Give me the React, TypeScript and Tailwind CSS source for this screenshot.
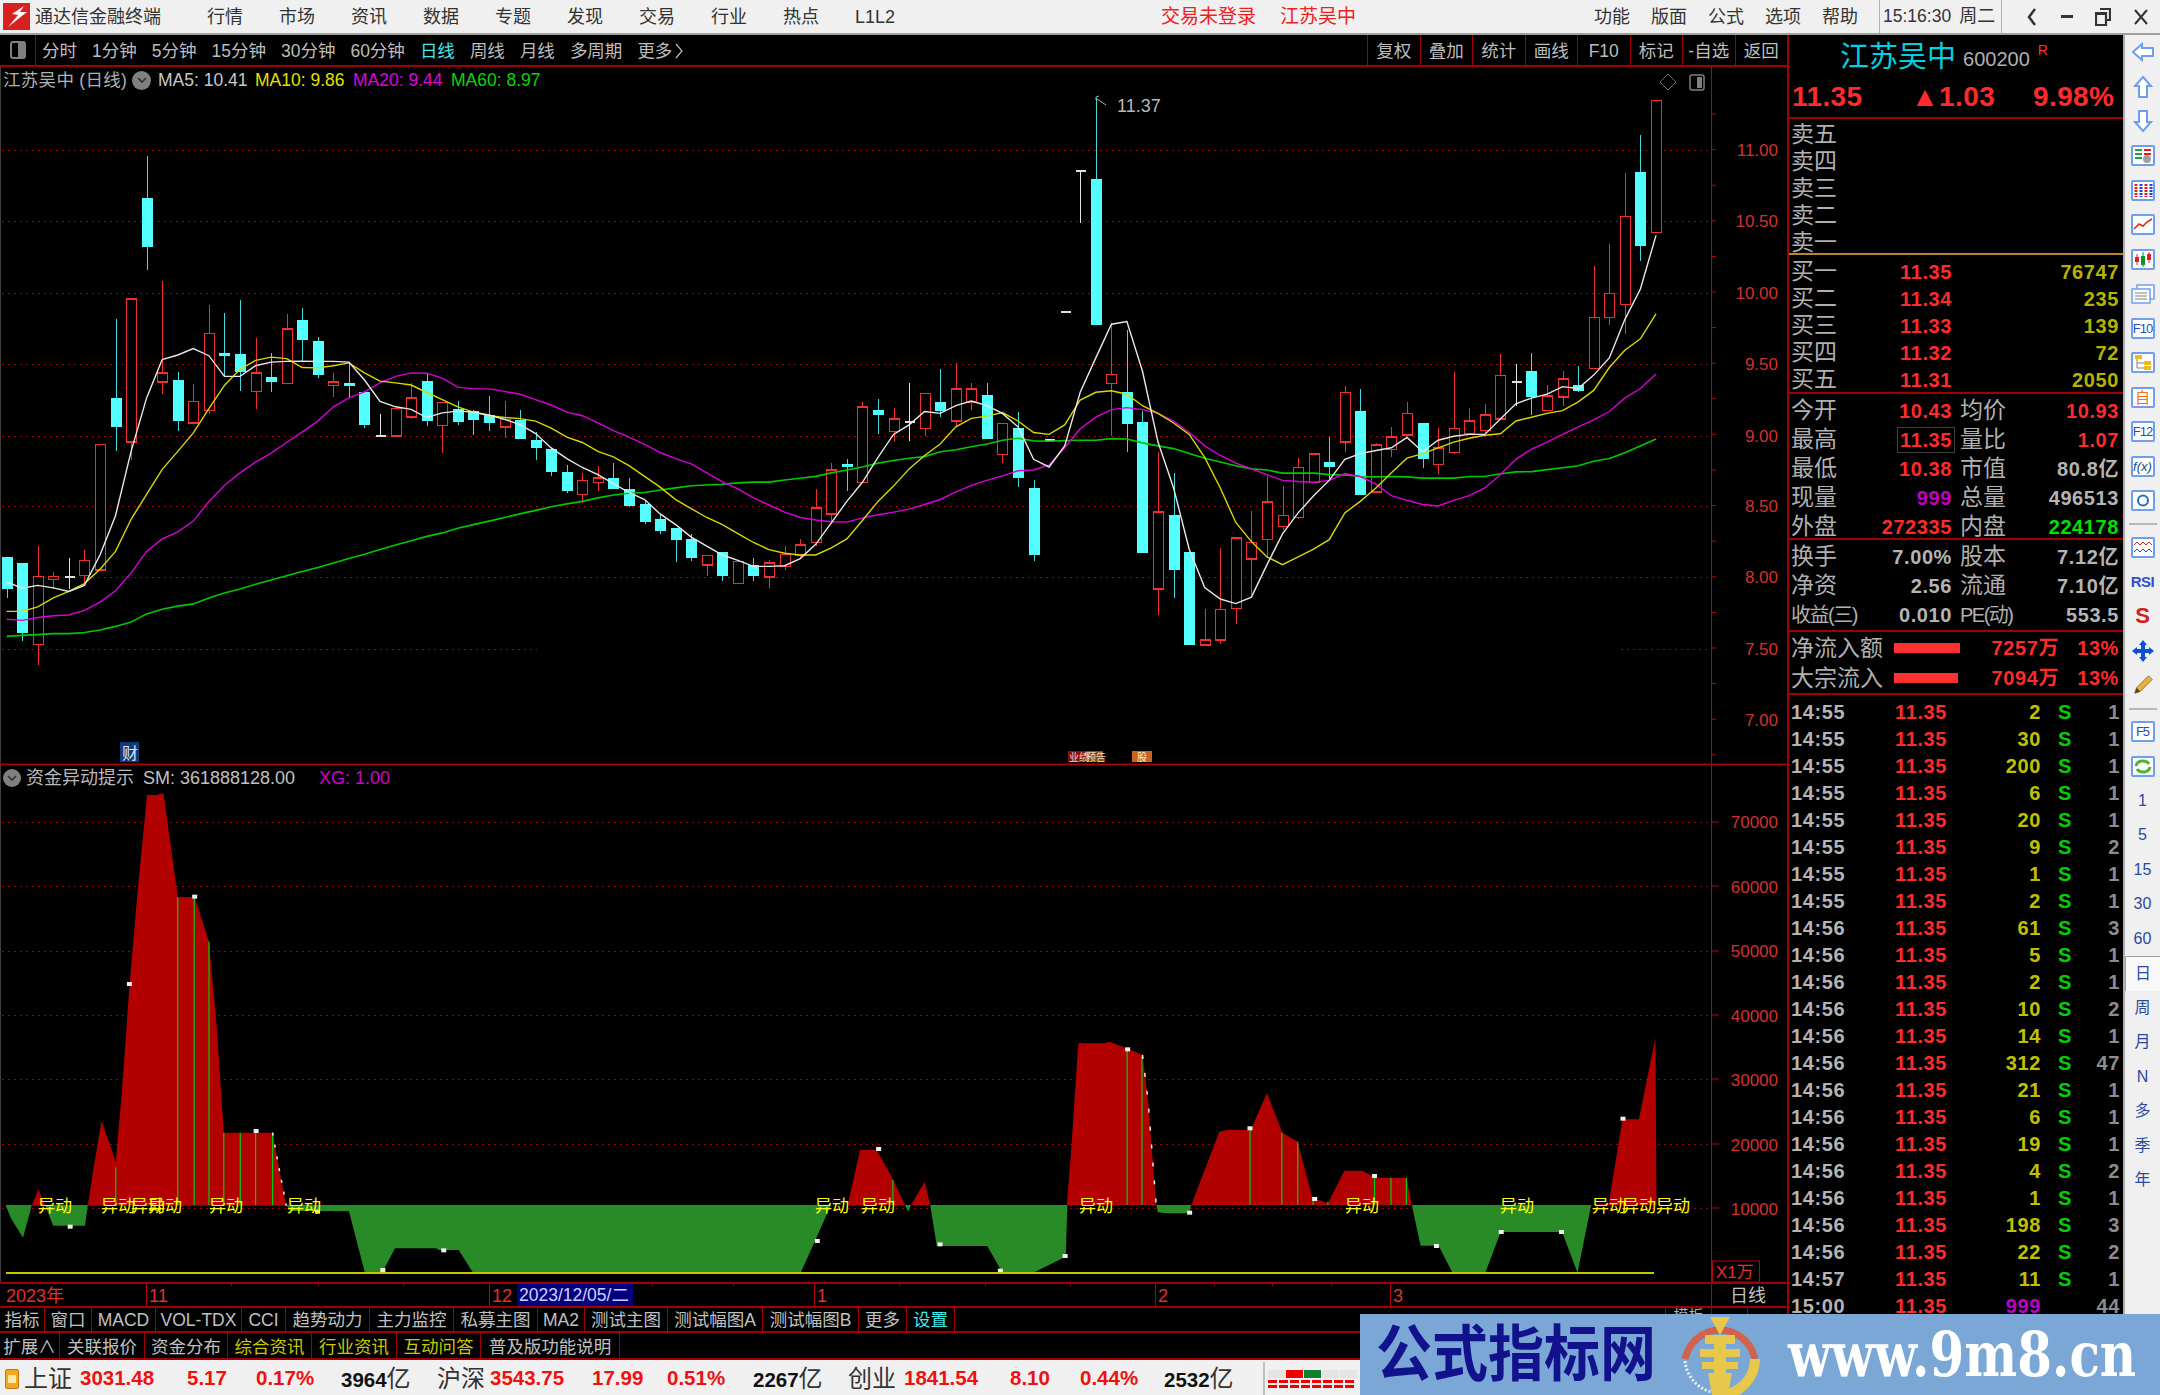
import type { ReactNode } from "react";

// --- candle data, read off the chart: [wickTop, bodyTop, bodyBottom, wickBottom, kind]
// kind 0 = up (red hollow), 1 = down (cyan), 2 = white doji
type Candle = [number, number, number, number, number];

const candlesA: Candle[] = [
  [1195, 1195, 1285, 1310, 1], [1212, 1212, 1408, 1430, 1], [1165, 1250, 1440, 1497, 0], [1238, 1250, 1256, 1285, 0],
  [1198, 1250, 1252, 1285, 2], [1175, 1205, 1248, 1270, 0], [880, 880, 1232, 1235, 0], [530, 750, 832, 900, 1],
  [473, 473, 873, 925, 0], [73, 190, 328, 392, 1], [422, 680, 706, 740, 0], [678, 699, 815, 842, 1],
  [712, 760, 820, 820, 0], [489, 570, 785, 795, 0], [513, 624, 627, 690, 1], [477, 628, 678, 732, 1],
  [582, 680, 732, 782, 0], [625, 691, 706, 733, 1], [514, 557, 710, 710, 0], [497, 531, 589, 650, 1],
  [580, 590, 686, 694, 1], [680, 705, 715, 748, 0], [650, 708, 715, 750, 1], [733, 733, 825, 833, 1],
  [796, 855, 857, 857, 2], [780, 780, 857, 857, 0], [708, 750, 803, 808, 0], [680, 704, 816, 828, 1],
  [763, 763, 828, 903, 0], [760, 780, 817, 825, 1], [785, 787, 812, 855, 1], [746, 797, 820, 842, 1],
  [760, 810, 832, 862, 0], [783, 812, 866, 866, 1], [845, 867, 891, 925, 1], [890, 892, 958, 968, 1],
  [938, 957, 1010, 1015, 1], [960, 982, 1020, 1045, 0], [940, 974, 987, 1010, 0], [933, 973, 1005, 1005, 1],
  [975, 1006, 1052, 1055, 1], [1035, 1048, 1098, 1102, 1], [1078, 1090, 1123, 1130, 1], [1115, 1115, 1148, 1210, 1],
  [1130, 1145, 1198, 1208, 1], [1192, 1192, 1218, 1250, 0], [1182, 1182, 1250, 1262, 1], [1208, 1208, 1270, 1270, 0],
  [1198, 1217, 1250, 1262, 1], [1205, 1213, 1252, 1282, 0], [1165, 1188, 1222, 1232, 0], [1145, 1162, 1190, 1195, 0],
  [1005, 1058, 1155, 1165, 0], [932, 952, 1075, 1095, 0], [920, 935, 942, 1010, 1],
];

const candlesB: Candle[] = [
  [815, 828, 1025, 1025, 0], [808, 836, 850, 898, 1], [832, 860, 892, 920, 0], [765, 864, 866, 916, 2],
  [793, 793, 885, 903, 0], [730, 816, 840, 855, 1], [714, 781, 865, 880, 0], [765, 781, 815, 835, 0],
  [765, 796, 913, 913, 1], [872, 872, 953, 975, 0], [842, 883, 1015, 1038, 1], [1020, 1040, 1215, 1230, 1],
  [911, 911, 913, 913, 2], [577, 577, 579, 579, 2], [208, 208, 210, 348, 2], [20, 232, 615, 615, 1],
  [610, 743, 767, 905, 0], [628, 790, 873, 945, 1], [838, 867, 1211, 1211, 1], [945, 1103, 1304, 1372, 0],
  [1000, 1110, 1254, 1328, 1], [1207, 1207, 1450, 1450, 1], [1357, 1437, 1450, 1450, 0], [1197, 1358, 1437, 1447, 0],
  [1170, 1170, 1355, 1395, 0], [1100, 1182, 1226, 1320, 0], [1008, 1076, 1175, 1220, 0], [1035, 1112, 1140, 1150, 0],
  [962, 987, 1117, 1120, 0], [951, 951, 1025, 1025, 0], [906, 973, 985, 1020, 1], [773, 790, 920, 945, 0],
  [780, 840, 1057, 1057, 1], [922, 927, 1050, 1050, 0], [880, 907, 940, 960, 0], [815, 845, 902, 905, 0],
  [871, 871, 963, 988, 1], [884, 935, 978, 1003, 0], [738, 884, 947, 950, 0], [832, 865, 898, 900, 0],
  [820, 849, 890, 895, 0], [690, 746, 860, 862, 0], [717, 761, 763, 825, 2], [686, 734, 803, 850, 1],
  [772, 800, 838, 840, 0], [735, 755, 802, 825, 0], [722, 770, 787, 790, 1], [460, 594, 728, 728, 0],
  [403, 532, 594, 614, 0], [216, 331, 560, 638, 0], [118, 213, 407, 447, 1], [28, 28, 372, 372, 0],
];

const ma5A = [1265, 1283, 1275, 1282, 1292, 1275, 1190, 1080, 900, 750, 643, 630, 612, 632, 690, 690, 660, 650, 648, 647, 648, 648, 650, 700, 760, 775, 782, 805, 792, 787, 790, 798, 810, 825, 850, 890, 920, 945, 965, 990, 1015, 1035, 1075, 1105, 1140, 1165, 1190, 1205, 1222, 1222, 1220, 1200, 1160, 1100, 1040];
const ma5B = [1025, 960, 900, 875, 840, 845, 825, 813, 825, 845, 880, 965, 985, 930, 790, 700, 612, 605, 735, 920, 1040, 1200, 1300, 1330, 1342, 1325, 1240, 1160, 1105, 1060, 1020, 965, 950, 942, 935, 908, 945, 915, 905, 900, 900, 860, 820, 805, 795, 775, 780, 745, 700, 600, 520, 380];
const ma10A = [1348, 1348, 1335, 1310, 1292, 1270, 1230, 1180, 1090, 1020, 950, 900, 848, 780, 715, 670, 645, 636, 640, 665, 666, 660, 652, 680, 703, 708, 714, 735, 755, 775, 790, 800, 805, 808, 815, 835, 860, 875, 900, 915, 940, 970, 1000, 1035, 1060, 1085, 1105, 1130, 1155, 1175, 1185, 1190, 1190, 1170, 1145];
const ma10B = [1125, 1075, 1035, 990, 955, 925, 880, 858, 852, 843, 865, 895, 900, 875, 810, 790, 786, 795, 825, 845, 870, 900, 960, 1040, 1130, 1180, 1220, 1240, 1220, 1200, 1175, 1105, 1075, 1040, 1000, 962, 950, 935, 920, 910, 902, 898, 865, 855, 845, 838, 815, 785, 725, 680, 650, 585];
const ma20A = [1370, 1373, 1365, 1360, 1358, 1345, 1322, 1290, 1240, 1180, 1145, 1125, 1095, 1040, 995, 960, 930, 905, 875, 845, 815, 775, 750, 733, 708, 690, 680, 681, 695, 720, 725, 725, 732, 740, 755, 770, 790, 800, 820, 842, 860, 880, 903, 920, 935, 960, 985, 1005, 1030, 1050, 1070, 1085, 1092, 1097, 1098];
const ma20B = [1118, 1110, 1103, 1095, 1083, 1070, 1050, 1033, 1020, 1008, 995, 993, 980, 935, 885, 855, 835, 830, 835, 845, 865, 895, 930, 955, 975, 990, 1005, 1020, 1023, 1025, 1020, 1002, 1010, 1030, 1060, 1072, 1083, 1087, 1072, 1060, 1040, 1005, 965, 938, 920, 900, 880, 862, 840, 805, 780, 742];
const ma60A = [1418, 1415, 1413, 1410, 1410, 1407, 1400, 1390, 1378, 1355, 1342, 1333, 1327, 1310, 1296, 1285, 1272, 1260, 1248, 1236, 1225, 1212, 1200, 1188, 1175, 1162, 1150, 1138, 1128, 1115, 1105, 1095, 1085, 1075, 1065, 1055, 1047, 1040, 1030, 1022, 1017, 1015, 1008, 1002, 996, 994, 992, 988, 986, 986, 980, 975, 970, 960, 952];
const ma60B = [985, 975, 968, 962, 958, 945, 940, 932, 925, 915, 910, 917, 918, 916, 915, 915, 911, 912, 922, 930, 937, 950, 962, 972, 982, 990, 993, 1001, 1001, 1001, 1005, 1006, 1010, 1011, 1010, 1011, 1014, 1014, 1014, 1010, 1010, 1003, 998, 997, 992, 987, 982, 970, 963, 948, 930, 912];

const ya = (v: number) => 130 + v / 2.8;
const yb = (v: number) => 90 + v / 2.613;
const cx = (i: number) => 6.6 + 15.56 * i;

const allCandles: Candle[] = [
  ...candlesA.map((c): Candle => [ya(c[0]), ya(c[1]), ya(c[2]), ya(c[3]), c[4]]),
  ...candlesB.map((c): Candle => [yb(c[0]), yb(c[1]), yb(c[2]), yb(c[3]), c[4]]),
];

const toLine = (a: number[], b: number[]) =>
  [...a.map(ya), ...b.map(yb)].map((y, i) => `${cx(i).toFixed(1)},${y.toFixed(1)}`).join(" ");

const maLines = [
  { color: "#00c800", pts: toLine(ma60A, ma60B), w: 1.6 },
  { color: "#d800d8", pts: toLine(ma20A, ma20B), w: 1.4 },
  { color: "#d8d800", pts: toLine(ma10A, ma10B), w: 1.4 },
  { color: "#e8e8e8", pts: toLine(ma5A, ma5B), w: 1.4 },
];

// lower panel shapes, coordinates from two crops
const z9 = (p: number[][]) => p.map(([x, y]) => `${(x / 1.823).toFixed(1)},${(760 + y / 3).toFixed(1)}`).join(" ");
const z10 = (p: number[][]) => p.map(([x, y]) => `${(860 + x / 1.823).toFixed(1)},${(1000 + y / 3).toFixed(1)}`).join(" ");

const redAreas = [
  z9([[58, 1337], [70, 1288], [82, 1337]]),
  z9([[160, 1337], [168, 1250], [185, 1082], [211, 1205], [222, 1000], [235, 700], [250, 410], [268, 105], [285, 105], [298, 100], [324, 410], [355, 412], [381, 545], [395, 800], [408, 1118], [497, 1118], [507, 1210], [522, 1337]]),
  z9([[1545, 1337]]) + " " + z10([[0, 450], [30, 450], [58, 530], [82, 615]]),
  z10([[93, 615], [118, 545], [128, 615]]),
  z10([[377, 615], [385, 450], [398, 130], [445, 130], [455, 125], [490, 148], [515, 165], [525, 300], [540, 615]]),
  z10([[604, 615], [655, 395], [670, 390], [712, 390], [742, 280], [770, 398], [798, 425], [825, 595], [853, 610], [883, 512], [915, 512], [940, 533], [996, 533], [1006, 615]]),
  z10([[1333, 615], [1365, 610], [1390, 358], [1420, 358], [1450, 113], [1452, 615]]),
];

const greenAreas = [
  z9([[10, 1335], [20, 1375], [42, 1433], [58, 1335]]),
  z9([[82, 1335], [97, 1397], [155, 1397], [160, 1335]]),
  z9([[522, 1335], [530, 1353], [636, 1353], [665, 1537], [697, 1537], [720, 1465], [795, 1465], [800, 1470], [836, 1470], [862, 1537], [1460, 1537], [1515, 1335]]),
  z10([[82, 615], [93, 615], [88, 635]]),
  z10([[128, 615], [140, 738], [232, 738], [255, 805], [258, 818], [316, 818], [375, 770], [378, 615]]),
  z10([[540, 615], [543, 637], [558, 640], [600, 640], [604, 615]]),
  z10([[1006, 615], [1022, 737], [1055, 737], [1080, 818], [1140, 818], [1168, 696], [1280, 696], [1308, 818], [1333, 615]]),
];

const greenBars = [
  ...[[211, 1222], [324, 412], [354, 412], [381, 545], [408, 1118], [438, 1118], [466, 1118], [497, 1118]].map(([x, y]) => [x / 1.823, 760 + y / 3]),
  ...[[60, 540], [487, 148], [514, 168], [711, 390], [769, 398], [798, 425], [826, 600], [853, 605], [938, 533], [968, 533], [996, 533]].map(([x, y]) => [860 + x / 1.823, 1000 + y / 3]),
];

const whiteMarks = [
  ...[[235, 672], [354, 410], [466, 1113], [127, 1400], [578, 1355], [808, 1471], [1489, 1443], [697, 1530]].map(([x, y]) => [x / 1.823, 760 + y / 3]),
  ...[[33, 447], [487, 148], [710, 385], [145, 733], [373, 768], [600, 638], [937, 528], [1390, 356], [828, 597], [1050, 738], [255, 812], [1168, 696], [1278, 696]].map(([x, y]) => [860 + x / 1.823, 1000 + y / 3]),
];

const moveLabels = [55, 118, 148, 165, 226, 304, 832, 878, 1096, 1362, 1517, 1609, 1639, 1673];
const upperLabels: [string, number][] = [["11.00", 156], ["10.50", 227], ["10.00", 299], ["9.50", 370], ["9.00", 442], ["8.50", 512], ["8.00", 583], ["7.50", 655], ["7.00", 726]];
const lowerLabels: [string, number][] = [["70000", 828], ["60000", 893], ["50000", 957], ["40000", 1022], ["30000", 1086], ["20000", 1151], ["10000", 1215]];

function UpperChart() {
  const gridY = [150, 221, 293, 364, 436, 506, 577];
  return (
    <svg viewBox="0 67 1787 698" width={1787} height={698} className="block absolute inset-0">
      <line x1={0.5} y1={67} x2={0.5} y2={765} stroke="#404040" />
      {gridY.map((y) => (
        <line key={y} x1={2} y1={y + 0.5} x2={1711} y2={y + 0.5} stroke="#a00000" strokeDasharray="2 4" />
      ))}
      <line x1={2} y1={649.5} x2={537} y2={649.5} stroke="#a00000" strokeDasharray="2 4" />
      <line x1={1621} y1={649.5} x2={1711} y2={649.5} stroke="#a00000" strokeDasharray="2 4" />
      {allCandles.map((c, i) => {
        const x = Math.round(cx(i));
        const col = c[4] === 0 ? "#f03030" : c[4] === 1 ? "#40dcdc" : "#e0e0e0";
        if (c[4] === 2) {
          return (
            <g key={i} shapeRendering="crispEdges">
              <line x1={x + 0.5} y1={c[0]} x2={x + 0.5} y2={c[3]} stroke={col} />
              <rect x={x - 4} y={c[1]} width={10} height={2} fill={col} />
            </g>
          );
        }
        return (
          <g key={i} shapeRendering="crispEdges">
            <line x1={x + 0.5} y1={c[0]} x2={x + 0.5} y2={c[1]} stroke={col} />
            <line x1={x + 0.5} y1={c[2]} x2={x + 0.5} y2={c[3]} stroke={col} />
            {c[4] === 1 ? (
              <rect x={x - 5} y={c[1]} width={11} height={Math.max(c[2] - c[1], 3)} fill="#54ffff" />
            ) : (
              <rect x={x - 4.5} y={c[1]} width={10} height={Math.max(c[2] - c[1], 3)} fill="#000" stroke={col} strokeWidth={1.5} />
            )}
          </g>
        );
      })}
      {maLines.map((l) => (
        <polyline key={l.color} points={l.pts} fill="none" stroke={l.color} strokeWidth={l.w} />
      ))}
      {/* high marker */}
      <path d="M1096 100 L1096 97 L1099 96 M1097 99 L1106 105" stroke="#b0b0b0" fill="none" />
      <text x={1117} y={112} fontSize={18} fill="#b8b8b8">11.37</text>
      {/* event badges */}
      <rect x={120} y={742} width={19} height={20} fill="#123a78" />
      <text x={122} y={759} fontSize={16} fill="#d8e8ff">财</text>
      <rect x={1068} y={751} width={18} height={11} fill="#8a1010" />
      <rect x={1086} y={751} width={17} height={11} fill="#8a4a10" />
      <text x={1069} y={761} fontSize={10} fill="#f0d8c0">业绩</text>
      <text x={1086} y={761} fontSize={10} fill="#f0d8c0">预告</text>
      <rect x={1132} y={751} width={20} height={11} fill="#c86420" />
      <text x={1137} y={761} fontSize={10} fill="#ffe8d0">股</text>
      {/* axis */}
      <line x1={1711.5} y1={67} x2={1711.5} y2={765} stroke="#c00000" />
      {Array.from({ length: 20 }, (_, i) => 114 + i * 35.6).map((y) => (
        <line key={y} x1={1711} y1={y} x2={1716} y2={y} stroke="#c00000" />
      ))}
      {upperLabels.map(([t, y]) => (
        <text key={t} x={1778} y={y} fontSize={17} fill="#d23030" textAnchor="end">{t}</text>
      ))}
      <path d="M1668 74 L1676 82 L1668 90 L1660 82 Z" fill="none" stroke="#707070" />
      <rect x={1690} y={75} width={14} height={15} rx={2} fill="none" stroke="#808080" strokeWidth={1.5} />
      <rect x={1697} y={77} width={5} height={11} fill="#808080" />
      <line x1={0} y1={764.5} x2={1787} y2={764.5} stroke="#b00000" strokeWidth={2} />
    </svg>
  );
}

function LowerChart() {
  const gridY = [822, 886, 951, 1015, 1079, 1144, 1208];
  return (
    <svg viewBox="0 765 1787 517" width={1787} height={517} className="block absolute inset-0">
      <line x1={0.5} y1={765} x2={0.5} y2={1282} stroke="#404040" />
      {gridY.map((y) => (
        <line key={y} x1={2} y1={y + 0.5} x2={1711} y2={y + 0.5} stroke="#a00000" strokeDasharray="2 4" />
      ))}
      {redAreas.map((p, i) => (
        <polygon key={i} points={p} fill="#b20000" />
      ))}
      {greenAreas.map((p, i) => (
        <polygon key={i} points={p} fill="#298a28" />
      ))}
      {greenBars.map(([x, y], i) => (
        <line key={i} x1={x} y1={y} x2={x} y2={1205} stroke="#00d000" strokeWidth={1.2} />
      ))}
      {whiteMarks.map(([x, y], i) => (
        <rect key={i} x={x - 2} y={y - 2} width={5} height={4} fill="#f0f0f0" />
      ))}
      <polyline points={z10([[515, 165], [525, 300], [540, 615]])} fill="none" stroke="#f0f0f0" strokeWidth={1.5} strokeDasharray="4 14" />
      <polyline points={z9([[497, 1118], [507, 1210], [522, 1337]])} fill="none" stroke="#f0f0f0" strokeWidth={1.5} strokeDasharray="3 9" />
      <line x1={6} y1={1273} x2={1654} y2={1273} stroke="#c8c800" strokeWidth={2} />
      {moveLabels.map((x) => (
        <text key={x} x={x} y={1212} fontSize={17} fill="#ffff00" textAnchor="middle">异动</text>
      ))}
      <line x1={1711.5} y1={765} x2={1711.5} y2={1282} stroke="#c00000" />
      {gridY.map((y) => (
        <line key={y} x1={1711} y1={y} x2={1719} y2={y} stroke="#c00000" />
      ))}
      {lowerLabels.map(([t, y]) => (
        <text key={t} x={1778} y={y} fontSize={17} fill="#d23030" textAnchor="end">{t}</text>
      ))}
      <rect x={1712.5} y={1261} width={47} height={21} fill="#000" stroke="#c00000" />
      <text x={1716} y={1278} fontSize={17} fill="#e03030">X1万</text>
    </svg>
  );
}

function TimeAxis() {
  const majors: [number, string][] = [[146, "11"], [489, "12"], [814, "1"], [1155, "2"], [1390, "3"]];
  const minors = [231, 318, 403, 652, 733, 899, 985, 1070, 1214, 1272, 1331];
  return (
    <svg viewBox="0 1282 1787 24" width={1787} height={24} className="block">
      <text x={6} y={1302} fontSize={18} fill="#e03030">2023年</text>
      {majors.map(([x, t]) => (
        <g key={x}>
          <line x1={x + 0.5} y1={1282} x2={x + 0.5} y2={1306} stroke="#b00000" />
          <text x={x + 3} y={1302} fontSize={18} fill="#e03030">{t}</text>
        </g>
      ))}
      {minors.map((x) => (
        <line key={x} x1={x + 0.5} y1={1282} x2={x + 0.5} y2={1286} stroke="#b00000" />
      ))}
      <rect x={517} y={1283} width={116} height={23} fill="#000080" />
      <text x={519} y={1301} fontSize={17.5} fill="#d0d0ff">2023/12/05/二</text>
      <line x1={1711.5} y1={1282} x2={1711.5} y2={1306} stroke="#b00000" />
      <text x={1730} y={1302} fontSize={18} fill="#c0c0c0">日线</text>
    </svg>
  );
}

function Chevron({ size }: { size: string }) {
  return (
    <span className={`${size} rounded-full bg-[#808080] flex items-center justify-center shrink-0`}>
      <svg viewBox="0 0 10 6" width={10} height={6}>
        <path d="M1 1 L5 5 L9 1" fill="none" stroke="#303030" strokeWidth={1.6} />
      </svg>
    </span>
  );
}

// ---- top and bottom bars
const navItems = ["行情", "市场", "资讯", "数据", "专题", "发现", "交易", "行业", "热点", "L1L2"];
const menuItems = ["功能", "版面", "公式", "选项", "帮助"];

function MenuBar() {
  return (
    <div className="flex items-center h-[35px] shrink-0 bg-[#f0f0f0] border-b-2 border-[#a0a0a0] text-[18px] text-[#333333]">
      <svg viewBox="0 0 27 27" width={27} height={27} className="ml-[3px] shrink-0">
        <rect width={27} height={27} fill="#d82020" />
        <path d="M21 3 L9 11 L15 12 L5 24 L24 9 L17 9 Z" fill="#ffffff" />
      </svg>
      <div className="flex items-center pt-[1px]">
        <span className="ml-[5px] w-[172px] shrink-0">通达信金融终端</span>
        {navItems.map((n) => (
          <span key={n} className="w-[72px] shrink-0">{n}</span>
        ))}
        <span className="ml-[234px] text-[19px] text-[#f02020] shrink-0">交易未登录</span>
        <span className="ml-[24px] text-[19px] text-[#f02020] shrink-0">江苏吴中</span>
        <span className="w-[238px] shrink-0" />
        {menuItems.map((n) => (
          <span key={n} className="w-[57px] shrink-0">{n}</span>
        ))}
      </div>
      <div className="flex items-center h-full border-x border-[#b0b0b0] w-[123px] shrink-0 pl-[3px] gap-[8px]">
        <span className="text-[17.5px]">15:16:30</span>
        <span>周二</span>
      </div>
      <div className="flex-1 flex items-center justify-around pl-[12px]">
        <svg viewBox="0 0 12 20" width={12} height={20}><path d="M9 2 L3 10 L9 18" fill="none" stroke="#333" strokeWidth={2.5} /></svg>
        <span className="w-[12px] h-[3px] bg-[#333333]" />
        <svg viewBox="0 0 16 18" width={16} height={18}><path d="M5 1 H15 V12 H12 M1 5 H11 V17 H1 Z M1 6 H11" fill="none" stroke="#333" strokeWidth={2.2} /></svg>
        <svg viewBox="0 0 14 16" width={14} height={16}><path d="M1 1 L13 15 M13 1 L1 15" fill="none" stroke="#333" strokeWidth={2} /></svg>
      </div>
    </div>
  );
}

const periods = ["分时", "1分钟", "5分钟", "15分钟", "30分钟", "60分钟", "日线", "周线", "月线", "多周期"];
const toolButtons = ["复权", "叠加", "统计", "画线", "F10", "标记", "-自选", "返回"];

function ToolBar() {
  return (
    <div className="flex items-center h-[32px] shrink-0 border-b-2 border-[#a00000] text-[17.5px] text-[#bdbdbd]">
      <div className="w-[36px] h-full border-r border-[#a00000] flex items-center justify-center shrink-0">
        <span className="w-[16px] h-[18px] rounded-[3px] border-2 border-[#808080] flex justify-end">
          <span className="w-[6px] h-full bg-[#808080]" />
        </span>
      </div>
      <div className="flex items-center gap-[15px] pl-[6px] pt-[2px]">
        {periods.map((p) => (
          <span key={p} className={p === "日线" ? "text-[#40e8e8]" : ""}>{p}</span>
        ))}
        <span className="flex items-center gap-[3px]">
          更多
          <svg viewBox="0 0 8 16" width={8} height={16}><path d="M1 1 L7 8 L1 15" fill="none" stroke="#bdbdbd" strokeWidth={1.2} /></svg>
        </span>
      </div>
      <div className="ml-auto flex h-full">
        {toolButtons.map((b) => (
          <span key={b} className="w-[52.5px] h-full border-l border-[#a00000] flex items-center justify-center pt-[2px]">{b}</span>
        ))}
      </div>
    </div>
  );
}

const tabsOne = [
  { t: "指标", w: "w-[45px]", c: "" }, { t: "窗口", w: "w-[47px]", c: "" }, { t: "MACD", w: "w-[64px]", c: "" },
  { t: "VOL-TDX", w: "w-[86px]", c: "" }, { t: "CCI", w: "w-[44px]", c: "" }, { t: "趋势动力", w: "w-[84px]", c: "" },
  { t: "主力监控", w: "w-[84px]", c: "" }, { t: "私募主图", w: "w-[84px]", c: "" }, { t: "MA2", w: "w-[47px]", c: "" },
  { t: "测试主图", w: "w-[83px]", c: "" }, { t: "测试幅图A", w: "w-[95px]", c: "" }, { t: "测试幅图B", w: "w-[96px]", c: "" },
  { t: "更多", w: "w-[48px]", c: "" }, { t: "设置", w: "w-[48px]", c: "text-[#40e8e8]" },
];
const tabsTwo = [
  { t: "扩展∧", w: "w-[60px]", c: "" }, { t: "关联报价", w: "w-[85px]", c: "" }, { t: "资金分布", w: "w-[83px]", c: "" },
  { t: "综合资讯", w: "w-[84px]", c: "text-[#c8c800]" }, { t: "行业资讯", w: "w-[85px]", c: "text-[#c8c800]" },
  { t: "互动问答", w: "w-[84px]", c: "text-[#c8c800]" }, { t: "普及版功能说明", w: "w-[139px]", c: "" },
];

function TabRow({ items, h, pad, children }: { items: typeof tabsOne; h: string; pad: string; children?: ReactNode }) {
  return (
    <div className={`flex items-stretch ${h} shrink-0 border-t-2 border-[#a00000] text-[17.5px] text-[#c0c0c0]`}>
      {items.map((i) => (
        <span key={i.t} className={`${i.w} ${i.c} ${pad} shrink-0 border-r border-[#a00000] flex items-center justify-center`}>{i.t}</span>
      ))}
      {children}
    </div>
  );
}

const statusCells = [
  { t: "上证", w: "w-[56px]", c: "text-[24px] text-[#333333]", n: false },
  { t: "3031.48", w: "w-[107px]", c: "text-[#f01010]", n: true },
  { t: "5.17", w: "w-[69px]", c: "text-[#f01010]", n: true },
  { t: "0.17%", w: "w-[85px]", c: "text-[#f01010]", n: true },
  { t: "3964", w: "w-[96px]", c: "text-[#111111]", n: true, u: "亿" },
  { t: "沪深", w: "w-[53px]", c: "text-[24px] text-[#333333]", n: false },
  { t: "3543.75", w: "w-[102px]", c: "text-[#f01010]", n: true },
  { t: "17.99", w: "w-[75px]", c: "text-[#f01010]", n: true },
  { t: "0.51%", w: "w-[86px]", c: "text-[#f01010]", n: true },
  { t: "2267", w: "w-[95px]", c: "text-[#111111]", n: true, u: "亿" },
  { t: "创业", w: "w-[56px]", c: "text-[24px] text-[#333333]", n: false },
  { t: "1841.54", w: "w-[106px]", c: "text-[#f01010]", n: true },
  { t: "8.10", w: "w-[70px]", c: "text-[#f01010]", n: true },
  { t: "0.44%", w: "w-[84px]", c: "text-[#f01010]", n: true },
  { t: "2532", w: "w-[99px]", c: "text-[#111111]", n: true, u: "亿" },
];

function StatusBar() {
  return (
    <div className="flex items-center h-[35px] shrink-0 bg-[#f0f0f0] pt-[2px]">
      <span className="w-[24px] shrink-0 flex justify-center">
        <span className="w-[14px] h-[20px] rounded-[2px] bg-[#f0a820] border border-[#c07810] flex items-center justify-center">
          <span className="w-[8px] h-[8px] bg-[#ffe8a0]" />
        </span>
      </span>
      {statusCells.map((s) => (
        <span key={s.t} className={`${s.w} ${s.c} shrink-0 ${s.n ? "text-[20.5px] font-bold" : ""}`}>
          {s.t}
          {s.u && <span className="text-[24px] font-normal text-[#333333]">{s.u}</span>}
        </span>
      ))}
      <div className="h-full border-l-2 border-[#c0c0c0] pl-[3px] flex flex-col justify-center gap-[3px]">
        <div className="flex gap-[1px]">
          {["bg-[#e4e4e4]", "bg-[#f00000]", "bg-[#108030]", "bg-[#e4e4e4]", "bg-[#e4e4e4]"].map((c, i) => (
            <span key={i} className={`w-[17px] h-[8px] ${c}`} />
          ))}
        </div>
        {[0, 1].map((r) => (
          <div key={r} className="flex gap-[2px] -mt-[1px]">
            {Array.from({ length: 8 }, (_, i) => (
              <span key={i} className="w-[9px] h-[3px] bg-[#f00000]" />
            ))}
          </div>
        ))}
      </div>
    </div>
  );
}

// ---- quote panel
const sellRows = ["卖五", "卖四", "卖三", "卖二", "卖一"];
const buyRows = [
  ["买一", "11.35", "76747"], ["买二", "11.34", "235"], ["买三", "11.33", "139"], ["买四", "11.32", "72"], ["买五", "11.31", "2050"],
];

const RED = "text-[#ff2a2a]";
const GRAY = "text-[#b4b4b4]";

type StatRow = { a: string; av: string; ac: string; b: string; bv: string; bc: string; box?: boolean; tight?: boolean };
const statsOne: StatRow[] = [
  { a: "今开", av: "10.43", ac: RED, b: "均价", bv: "10.93", bc: RED },
  { a: "最高", av: "11.35", ac: RED, b: "量比", bv: "1.07", bc: RED, box: true },
  { a: "最低", av: "10.38", ac: RED, b: "市值", bv: "80.8亿", bc: GRAY },
  { a: "现量", av: "999", ac: "text-[#c000c0]", b: "总量", bv: "496513", bc: GRAY },
  { a: "外盘", av: "272335", ac: RED, b: "内盘", bv: "224178", bc: "text-[#00e000]" },
];
const statsTwo: StatRow[] = [
  { a: "换手", av: "7.00%", ac: GRAY, b: "股本", bv: "7.12亿", bc: GRAY },
  { a: "净资", av: "2.56", ac: GRAY, b: "流通", bv: "7.10亿", bc: GRAY },
  { a: "收益(三)", av: "0.010", ac: GRAY, b: "PE(动)", bv: "553.5", bc: GRAY, tight: true },
];

const ticks: [string, string, string, string][] = [
  ["14:55", "2", "S", "1"], ["14:55", "30", "S", "1"], ["14:55", "200", "S", "1"], ["14:55", "6", "S", "1"],
  ["14:55", "20", "S", "1"], ["14:55", "9", "S", "2"], ["14:55", "1", "S", "1"], ["14:55", "2", "S", "1"],
  ["14:56", "61", "S", "3"], ["14:56", "5", "S", "1"], ["14:56", "2", "S", "1"], ["14:56", "10", "S", "2"],
  ["14:56", "14", "S", "1"], ["14:56", "312", "S", "47"], ["14:56", "21", "S", "1"], ["14:56", "6", "S", "1"],
  ["14:56", "19", "S", "1"], ["14:56", "4", "S", "2"], ["14:56", "1", "S", "1"], ["14:56", "198", "S", "3"],
  ["14:56", "22", "S", "2"], ["14:57", "11", "S", "1"], ["15:00", "999", "", "44"],
];

const NUM = "text-[20px] font-bold tracking-[0.6px]";
const LABEL = "text-[23px] text-[#b0b0b0] leading-none";

function Stat({ r }: { r: StatRow }) {
  const label = r.tight ? "text-[20px] tracking-[-1.5px] text-[#b0b0b0] leading-none" : LABEL;
  return (
    <div className="flex items-center h-[29px]">
      <div className="w-[161px] flex justify-between items-center">
        <span className={label}>{r.a}</span>
        <span className={`${NUM} ${r.ac} ${r.box ? "border border-[#404040] px-[2px] -mr-[3px] leading-[24px]" : ""}`}>{r.av}</span>
      </div>
      <div className="ml-[8px] w-[159px] flex justify-between items-center">
        <span className={label}>{r.b}</span>
        <span className={`${NUM} ${r.bc}`}>{r.bv}</span>
      </div>
    </div>
  );
}

function FlowRow({ label, bar, val, pct }: { label: string; bar: string; val: string; pct: string }) {
  return (
    <div className="flex items-center h-[30px]">
      <span className="w-[103px] shrink-0 text-[23px] text-[#b0b0b0] leading-none">{label}</span>
      <span className={`${bar} h-[10px] bg-[#ff3030] shrink-0`} />
      <span className="flex-1" />
      <span className={`${NUM} ${RED}`}>{val}</span>
      <span className={`${NUM} ${RED} w-[60px] text-right`}>{pct}</span>
    </div>
  );
}

function QuotePanel() {
  return (
    <div className="w-[336px] shrink-0 flex flex-col border-l-2 border-[#a00000] overflow-hidden">
      <div className="h-[84px] shrink-0 border-b-2 border-[#a00000] flex flex-col">
        <div className="h-[44px] flex items-center pl-[51px] shrink-0">
          <span className="text-[29px] text-[#00d0e0] leading-none">江苏吴中</span>
          <span className="ml-[7px] mt-[4px] text-[20px] text-[#b0b0b0]">600200</span>
          <span className="ml-[8px] -mt-[14px] text-[14px] text-[#ff3030]">R</span>
        </div>
        <div className="flex items-center pl-[3px] mt-[4px] text-[28px] tracking-[0.4px] font-bold text-[#ff2a2a] leading-none">
          <span className="w-[119px]">11.35</span>
          <span className="w-[122px]">▲1.03</span>
          <span>9.98%</span>
        </div>
      </div>
      <div className="h-[136px] shrink-0 pl-[2px] pt-[2px] border-b-2 border-[#b8862b]">
        {sellRows.map((s) => (
          <div key={s} className={`h-[27px] flex items-center ${LABEL}`}>{s}</div>
        ))}
      </div>
      <div className="h-[139px] shrink-0 pl-[2px] pt-[3px] border-b-2 border-[#a00000]">
        {buyRows.map(([l, p, v]) => (
          <div key={l} className="h-[27px] flex items-center">
            <div className="w-[161px] flex justify-between items-center">
              <span className={LABEL}>{l}</span>
              <span className={`${NUM} ${RED}`}>{p}</span>
            </div>
            <span className={`${NUM} w-[167px] text-right text-[#b4b400]`}>{v}</span>
          </div>
        ))}
      </div>
      <div className="h-[146px] shrink-0 pl-[2px] pt-[2px] border-b-2 border-[#a00000]">
        {statsOne.map((r) => (
          <Stat key={r.a} r={r} />
        ))}
      </div>
      <div className="h-[92px] shrink-0 pl-[2px] pt-[2px] border-b-2 border-[#a00000]">
        {statsTwo.map((r) => (
          <Stat key={r.a} r={r} />
        ))}
      </div>
      <div className="h-[63px] shrink-0 pl-[2px] pt-[1px] pr-[4px] border-b-2 border-[#a00000]">
        <FlowRow label="净流入额" bar="w-[66px]" val="7257万" pct="13%" />
        <FlowRow label="大宗流入" bar="w-[64px]" val="7094万" pct="13%" />
      </div>
      <div className="pl-[2px] pt-[3px]">
        {ticks.map((t, i) => (
          <div key={i} className={`h-[27px] flex items-center ${NUM}`}>
            <span className="w-[72px] text-[#b4b4b4]">{t[0]}</span>
            <span className={`w-[84px] text-right ${RED}`}>11.35</span>
            <span className={`w-[94px] text-right ${t[1] === "999" ? "text-[#c000c0]" : "text-[#c0c000]"}`}>{t[1]}</span>
            <span className="w-[31px] text-right text-[#00d000]">{t[2]}</span>
            <span className="w-[48px] text-right text-[#8c8c8c]">{t[3]}</span>
          </div>
        ))}
      </div>
    </div>
  );
}

// ---- right-hand tool strip
function Tile({ children }: { children: ReactNode }) {
  return (
    <span className="w-[24px] h-[21px] bg-white border-2 border-[#6f9df0] rounded-[2px] flex items-center justify-center overflow-hidden text-[14px] leading-none text-[#2050c0]">
      {children}
    </span>
  );
}

const stripIcons: ReactNode[] = [
  <svg key="l" viewBox="0 0 24 20" width={24} height={20}><path d="M2 10 L11 2 V6 H22 V14 H11 V18 Z" fill="#fff" stroke="#6f9df0" strokeWidth={2} /></svg>,
  <svg key="u" viewBox="0 0 20 24" width={20} height={24}><path d="M10 2 L18 11 H14 V22 H6 V11 H2 Z" fill="#fff" stroke="#6f9df0" strokeWidth={2} /></svg>,
  <svg key="d" viewBox="0 0 20 24" width={20} height={24}><path d="M10 22 L18 13 H14 V2 H6 V13 H2 Z" fill="#fff" stroke="#6f9df0" strokeWidth={2} /></svg>,
  <Tile key="a"><svg viewBox="0 0 20 17" width={20} height={17}><path d="M2 3 H9 M2 7 H9 M2 11 H9" stroke="#20a040" strokeWidth={2} /><path d="M11 3 H18 M11 7 H18" stroke="#e02020" strokeWidth={2} /><circle cx={14} cy={12} r={4} fill="#a0a0a0" /></svg></Tile>,
  <Tile key="b"><svg viewBox="0 0 20 17" width={20} height={17}><path d="M3 2 V15" stroke="#e02020" strokeWidth={3} strokeDasharray="2 1" /><path d="M8 2 V15" stroke="#2040e0" strokeWidth={3} strokeDasharray="2 1" /><path d="M13 2 V15" stroke="#e02020" strokeWidth={3} strokeDasharray="2 1" /><path d="M18 2 V15" stroke="#2040e0" strokeWidth={3} strokeDasharray="2 1" /></svg></Tile>,
  <Tile key="c"><svg viewBox="0 0 20 17" width={20} height={17}><path d="M1 13 L6 8 L10 10 L14 6 L19 3" fill="none" stroke="#e02020" strokeWidth={1.5} /></svg></Tile>,
  <Tile key="d2"><svg viewBox="0 0 20 17" width={20} height={17}><path d="M4 3 V14" stroke="#e02020" /><rect x={2} y={6} width={4} height={5} fill="#e02020" /><path d="M10 1 V16" stroke="#109030" /><rect x={8} y={5} width={4} height={9} fill="#109030" /><path d="M16 1 V12" stroke="#e02020" /><rect x={14} y={3} width={4} height={6} fill="#e02020" /></svg></Tile>,
  <svg key="e" viewBox="0 0 24 20" width={24} height={20}><rect x={6} y={1} width={17} height={14} fill="#fff" stroke="#6f9df0" strokeWidth={1.5} /><rect x={1} y={5} width={18} height={14} fill="#fff" stroke="#6f9df0" strokeWidth={1.5} /><path d="M4 9 H16 M4 12 H16 M4 15 H16" stroke="#808080" /></svg>,
  <Tile key="f10"><span className="text-[13px] tracking-[-1px]">F10</span></Tile>,
  <Tile key="g"><svg viewBox="0 0 20 17" width={20} height={17}><path d="M4 4 V14 H12 M4 9 H12" fill="none" stroke="#808080" /><rect x={2} y={1} width={7} height={4} fill="#f0b820" /><rect x={11} y={7} width={7} height={4} fill="#f0b820" /><rect x={11} y={12} width={7} height={4} fill="#f0b820" /></svg></Tile>,
  <Tile key="zi"><span className="text-[15px] text-[#f07020]">自</span></Tile>,
  <Tile key="f12"><span className="text-[13px] tracking-[-1px]">F12</span></Tile>,
  <Tile key="fx"><span className="text-[13px] italic text-[#105090]">f(x)</span></Tile>,
  <Tile key="o"><svg viewBox="0 0 20 17" width={20} height={17}><circle cx={10} cy={8.5} r={5} fill="none" stroke="#2070c0" strokeWidth={2} /></svg></Tile>,
  <span key="s1" className="w-[28px] h-[2px] bg-[#b8b8b8] my-[5px]" />,
  <Tile key="w"><svg viewBox="0 0 20 17" width={20} height={17}><path d="M1 6 L4 3 L7 6 L10 3 L13 6 L16 3 L19 6" fill="none" stroke="#e02020" /><path d="M1 13 L4 10 L7 13 L10 10 L13 13 L16 10 L19 13" fill="none" stroke="#2040e0" /></svg></Tile>,
  <span key="rsi" className="text-[15px] font-bold text-[#3050d0] tracking-[-0.5px]">RSI</span>,
  <span key="s" className="text-[22px] font-bold text-[#d02020] leading-none">S</span>,
  <svg key="m" viewBox="0 0 24 24" width={24} height={24}><path d="M12 1 L16 6 H14 V10 H18 V8 L23 12 L18 16 V14 H14 V18 H16 L12 23 L8 18 H10 V14 H6 V16 L1 12 L6 8 V10 H10 V6 H8 Z" fill="#1050d0" /></svg>,
  <svg key="p" viewBox="0 0 24 24" width={22} height={22}><path d="M3 21 L5 15 L18 2 L22 6 L9 19 Z" fill="#e8b040" stroke="#907030" /><path d="M3 21 L5 15 L9 19 Z" fill="#604020" /></svg>,
  <span key="s2" className="w-[28px] h-[2px] bg-[#b8b8b8] my-[5px]" />,
  <Tile key="f5"><span className="text-[13px] tracking-[-1px]">F5</span></Tile>,
  <Tile key="r"><svg viewBox="0 0 20 17" width={20} height={17}><path d="M3 8 A7 6 0 0 1 16 6 M17 9 A7 6 0 0 1 4 11" fill="none" stroke="#50b040" strokeWidth={3} /></svg></Tile>,
];

const periodStrip = ["1", "5", "15", "30", "60", "日", "周", "月", "N", "多", "季", "年"];

function ToolStrip() {
  return (
    <div className="flex-1 bg-[#f0f0f0] border-l-2 border-[#b0b0b0] flex flex-col items-center text-[#2a4aa0] text-[16px]">
      {stripIcons.map((icon, i) => {
        const k = (icon as { key?: string }).key;
        return k === "s1" || k === "s2" ? (
          icon
        ) : (
          <div key={i} className="h-[34.5px] w-full flex items-center justify-center shrink-0">{icon}</div>
        );
      })}
      {periodStrip.map((p) => (
        <div
          key={p}
          className={`h-[34.5px] w-full flex items-center justify-center shrink-0 ${p === "日" ? "bg-[#f8f8f8] border-l border-t border-[#a0a0a0]" : ""}`}
        >
          {p}
        </div>
      ))}
    </div>
  );
}

function Watermark() {
  return (
    <div className="absolute right-0 bottom-0 w-[800px] h-[81px] bg-[#7ba7d6] flex items-center overflow-hidden">
      <span className="ml-[16px] w-[284px] shrink-0 text-[56px] font-bold text-[#12128c] leading-none scale-y-110 origin-center">公式指标网</span>
      <svg viewBox="0 0 80 80" width={80} height={80} className="ml-[20px] shrink-0">
        <path d="M5 44 A36 38 0 0 1 75 44" fill="none" stroke="#d0624e" strokeWidth={7} />
        <path d="M75 44 A36 36 0 0 1 40 80" fill="none" stroke="#e8c84a" strokeWidth={10} />
        <path d="M5 46 A36 36 0 0 0 36 78" fill="none" stroke="#f0f0f0" strokeWidth={3} strokeDasharray="2 2" />
        <path d="M30 2 L40 20 L50 2 Z" fill="#e8c84a" />
        <rect x={25} y={20} width={30} height={9} fill="#e8c84a" />
        <rect x={20} y={34} width={40} height={8} fill="#e8c84a" />
        <rect x={34} y={20} width={12} height={40} fill="#e8c84a" />
        <rect x={22} y={47} width={36} height={7} fill="#e8c84a" />
        <path d="M28 58 H52 L48 80 H32 Z" fill="#e8c84a" />
      </svg>
      <span className="ml-[28px] shrink-0 text-[50px] font-bold text-white leading-none scale-y-125 font-['DejaVu_Serif',serif]">www.9m8.cn</span>
    </div>
  );
}

export default function App() {
  return (
    <div className="relative w-[2160px] h-[1395px] overflow-hidden bg-black flex flex-col whitespace-nowrap font-['Liberation_Sans','Noto_Sans_CJK_SC',sans-serif]">
      <MenuBar />
      <div className="flex flex-1 min-h-0">
        <div className="w-[1787px] shrink-0 flex flex-col">
          <ToolBar />
          <div className="relative h-[698px] shrink-0">
            <UpperChart />
            <div className="absolute left-[3px] top-[3px] flex items-center h-[20px] text-[17.5px]">
              <span className="w-[129px] tracking-[0.3px] text-[#b0b0b0]">江苏吴中 (日线)</span>
              <Chevron size="w-[19px] h-[19px]" />
              <span className="ml-[7px] w-[97px] text-[#c8c8c8]">MA5: 10.41</span>
              <span className="w-[98px] text-[#e0e000]">MA10: 9.86</span>
              <span className="w-[98px] text-[#e000e0]">MA20: 9.44</span>
              <span className="text-[#00d800]">MA60: 8.97</span>
            </div>
          </div>
          <div className="relative h-[517px] shrink-0">
            <LowerChart />
            <div className="absolute left-[3px] top-[3px] flex items-center h-[20px] text-[18px]">
              <Chevron size="w-[18px] h-[18px]" />
              <span className="ml-[5px] w-[117px] text-[#b8b8b8]">资金异动提示</span>
              <span className="w-[176px] text-[#c0c0c0]">SM: 361888128.00</span>
              <span className="text-[#d000d0]">XG: 1.00</span>
            </div>
          </div>
          <div className="h-[24px] shrink-0 border-t-0">
            <div className="h-[2px] -mb-[2px] bg-[#a00000] relative" />
            <TimeAxis />
          </div>
          <TabRow items={tabsOne} h="h-[25px]" pad="pt-[2px]">
            <span className="ml-auto w-[46px] border-l border-[#a00000] flex justify-center items-start text-[15px] text-[#b0b0b0] leading-none">模板</span>
            <span className="w-[36px] border-l border-[#a00000]" />
            <span className="w-[40px] border-l border-[#a00000]" />
          </TabRow>
          <div className="border-b-2 border-[#a00000]">
            <TabRow items={tabsTwo} h="h-[27px]" pad="pt-[4px]" />
          </div>
        </div>
        <QuotePanel />
        <ToolStrip />
      </div>
      <StatusBar />
      <Watermark />
    </div>
  );
}
